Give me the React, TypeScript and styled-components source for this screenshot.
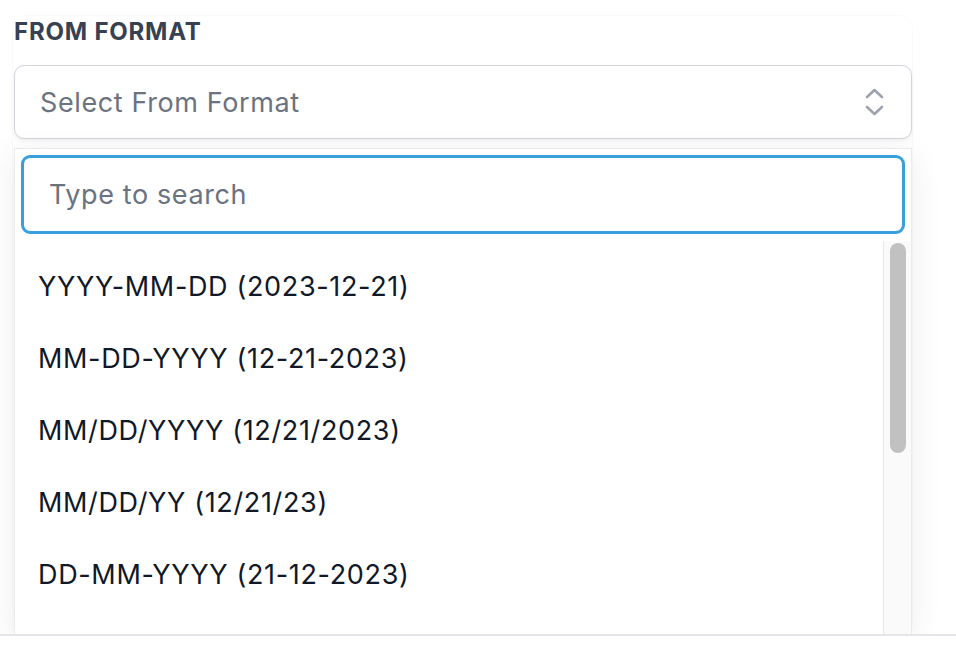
import React from 'react';
import styled, { createGlobalStyle } from 'styled-components';

const GlobalStyle = createGlobalStyle`
  html, body {
    margin: 0;
    padding: 0;
    background: #ffffff;
    font-family: Inter, "Noto Sans", "Liberation Sans", sans-serif;
  }
  * {
    box-sizing: border-box;
  }
`;

const Viewport = styled.div`
  height: 636px;
  overflow: hidden;
  border-bottom: 2px solid #e6e5eb;
  padding: 15px 44px 0 13px;
`;

const Field = styled.div`
  border-radius: 12px;
  box-shadow: 0 0 0 1px rgba(0, 0, 0, 0.02);
  height: 100%;
`;

const Label = styled.div`
  font-size: 24px;
  font-weight: 700;
  letter-spacing: 0.8px;
  color: #374151;
  text-transform: uppercase;
  line-height: 32px;
  margin: 1px 0 17px 1px;
`;

const SelectButton = styled.button`
  display: flex;
  align-items: center;
  justify-content: space-between;
  width: calc(100% - 1px);
  margin-left: 1px;
  height: 74px;
  padding: 0 27px 0 25px;
  background: #ffffff;
  border: 1.5px solid #d1d4da;
  border-radius: 10px;
  box-shadow: 0 2px 4px rgba(0, 0, 0, 0.06);
  font-family: inherit;
  font-size: 27px;
  letter-spacing: 0.6px;
  color: #6b7280;
  cursor: pointer;
`;

const Panel = styled.div`
  margin-top: 9px;
  margin-left: 1px;
  background: #ffffff;
  border: 1px solid #ebebeb;
  border-bottom: none;
  box-shadow: 0 6px 30px rgba(0, 0, 0, 0.08);
  padding: 6px 6px 0 6px;
`;

const SearchInput = styled.input`
  display: block;
  width: 100%;
  height: 79px;
  padding: 0 25px;
  border: 3px solid #38a0de;
  border-radius: 9px;
  outline: none;
  font-family: inherit;
  font-size: 27px;
  letter-spacing: 0.6px;
  color: #111827;

  &::placeholder {
    color: #6b7280;
  }
`;

const List = styled.div`
  display: flex;
  margin: 7px -6px 0 -6px;
  height: 394px;
`;

const Options = styled.ul`
  flex: 1;
  list-style: none;
  margin: 0;
  padding: 9px 0 0 0;
  overflow: hidden;
`;

const Option = styled.li`
  height: 72px;
  display: flex;
  align-items: center;
  padding: 0 23px;
  font-size: 27px;
  letter-spacing: 0.65px;
  color: #111827;
  cursor: pointer;
`;

const ScrollTrack = styled.div`
  width: 28px;
  flex-shrink: 0;
  background: #fafafa;
  border-left: 1px solid #e8e8e8;
  padding: 2px 5px 0 6px;
`;

const ScrollThumb = styled.div`
  height: 210px;
  border-radius: 8px;
  background: #c1c1c1;
`;

const SelectorIcon = () => (
  <svg width="19" height="30" viewBox="0 0 19 30" fill="none">
    <path
      d="M2 10 L9.5 3 L17 10 M2 20 L9.5 27 L17 20"
      stroke="#9ca3af"
      strokeWidth="2.6"
      strokeLinecap="round"
      strokeLinejoin="round"
    />
  </svg>
);

const formats = [
  'YYYY-MM-DD (2023-12-21)',
  'MM-DD-YYYY (12-21-2023)',
  'MM/DD/YYYY (12/21/2023)',
  'MM/DD/YY (12/21/23)',
  'DD-MM-YYYY (21-12-2023)',
];

const App: React.FC = () => {
  return (
    <>
      <GlobalStyle />
      <Viewport>
        <Field>
          <Label>From Format</Label>
          <SelectButton type="button">
            <span>Select From Format</span>
            <SelectorIcon />
          </SelectButton>
          <Panel>
            <SearchInput placeholder="Type to search" />
            <List>
              <Options>
                {formats.map((f) => (
                  <Option key={f}>{f}</Option>
                ))}
              </Options>
              <ScrollTrack>
                <ScrollThumb />
              </ScrollTrack>
            </List>
          </Panel>
        </Field>
      </Viewport>
    </>
  );
};

export default App;
